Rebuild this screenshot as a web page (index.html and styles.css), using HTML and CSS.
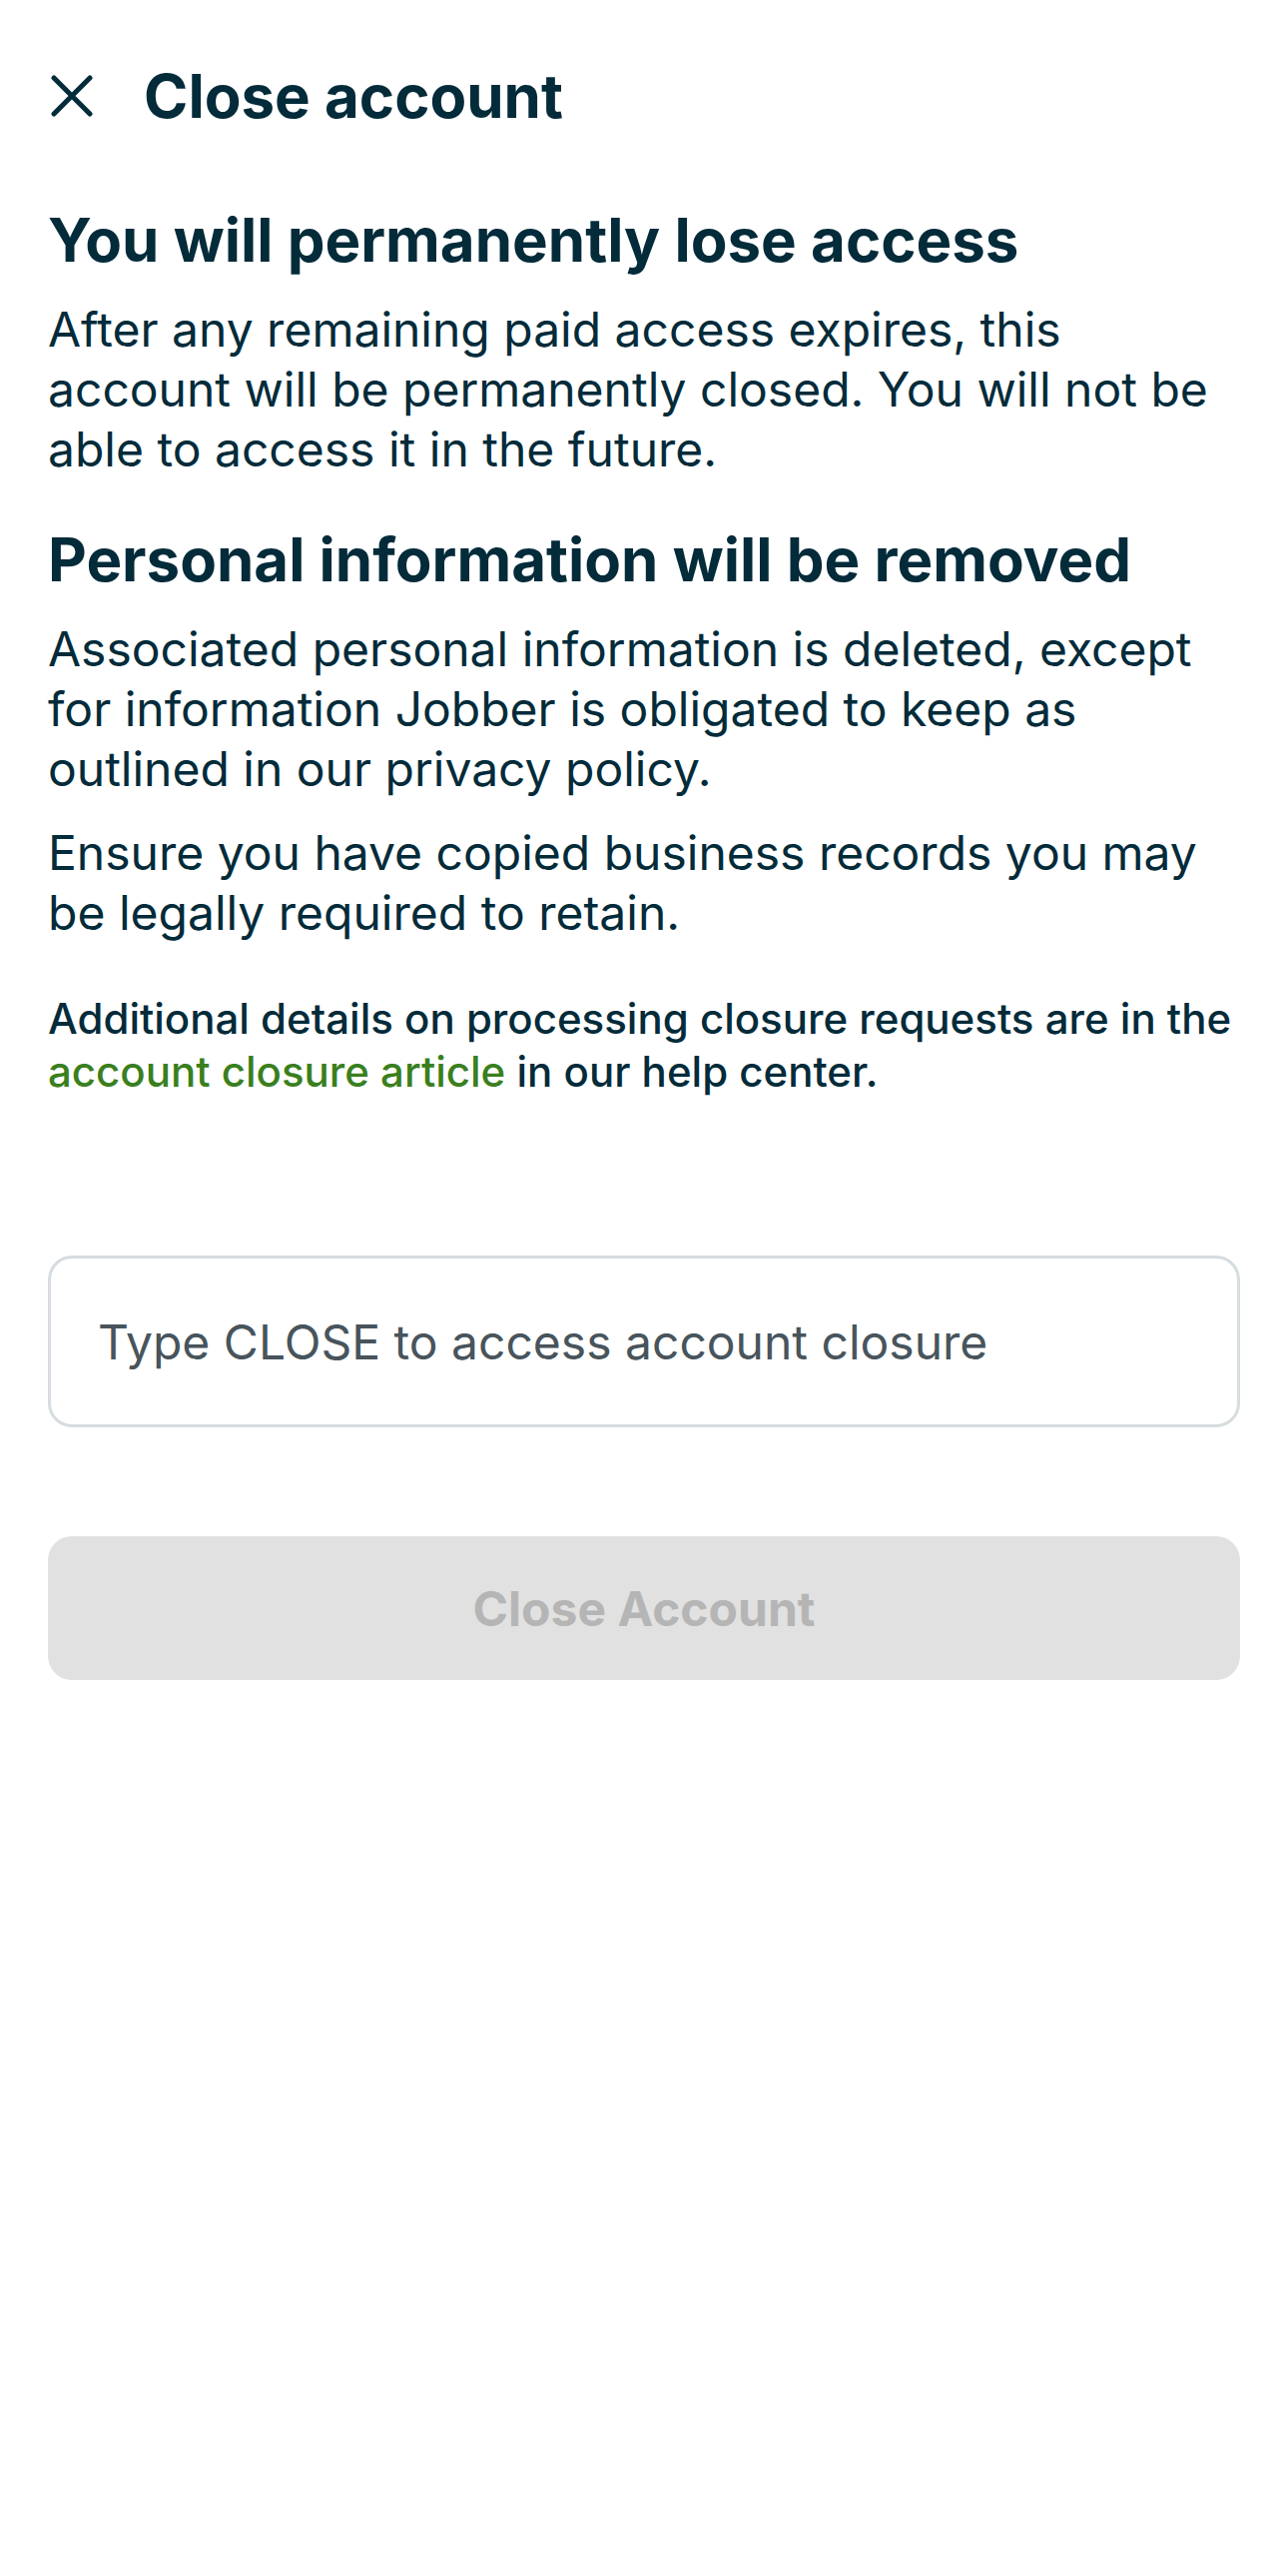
FILE: index.html
```html
<!DOCTYPE html>
<html lang="en">
<head>
  <meta charset="UTF-8">
  <title>Close account</title>
  <link rel="stylesheet" href="styles.css">
</head>
<body>
  <header class="top-bar">
    <button class="close-btn" aria-label="Close">
      <svg width="42" height="42" viewBox="0 0 42 42">
        <path d="M3 3 L39 39 M39 3 L3 39" stroke="#032b3a" stroke-width="5" stroke-linecap="round" fill="none"/>
      </svg>
    </button>
    <h1 class="title">Close account</h1>
  </header>

  <main class="content">
    <h2 class="section-title first">You will permanently lose access</h2>
    <p class="text">After any remaining paid access expires, this account will be permanently closed. You will not be able to access it in the future.</p>

    <h2 class="section-title">Personal information will be removed</h2>
    <p class="text">Associated personal information is deleted, except for information Jobber is obligated to keep as outlined in our privacy policy.</p>
    <p class="text">Ensure you have copied business records you may be legally required to retain.</p>

    <p class="note">Additional details on processing closure requests are in the <a href="#">account closure article</a> in our help center.</p>

    <input class="confirm-input" type="text" placeholder="Type CLOSE to access account closure">

    <button class="danger-btn" disabled>Close Account</button>
  </main>
</body>
</html>
```

FILE: styles.css
```css
body {
  margin: 0;
  background: #fff;
  color: #032b3a;
  font-family: Inter, "Noto Sans", sans-serif;
}

.top-bar {
  display: flex;
  align-items: center;
  height: 72px;
  padding: 60px 48px 0 51px;
}
.close-btn {
  display: flex;
  padding: 0;
  border: none;
  background: none;
  width: 42px;
  height: 42px;
}
.title {
  margin: 0 0 0 51px;
  font-size: 60px;
  line-height: 72px;
  font-weight: 700;
}

.content {
  padding: 0 48px;
  display: flex;
  flex-direction: column;
}

.section-title {
  margin: 44px 0 0;
  font-size: 60px;
  line-height: 72px;
  font-weight: 700;
}
.section-title.first {
  margin-top: 72px;
}

.text {
  margin: 24px 0 0;
  font-size: 48px;
  line-height: 60px;
}

.note {
  margin: 49px 0 0;
  font-size: 42px;
  line-height: 53px;
  font-weight: 500;
}
.note a {
  color: #3a7f1e;
  text-decoration: none;
}

.confirm-input {
  margin-top: 158px;
  height: 172px;
  box-sizing: border-box;
  border: 3px solid #d6dcdf;
  border-radius: 24px;
  padding: 0 47px;
  font-family: Inter, "Noto Sans", sans-serif;
  font-size: 48px;
  color: #032b3a;
  outline: none;
}
.confirm-input::placeholder {
  color: #48545c;
}

.danger-btn {
  margin-top: 109px;
  height: 144px;
  border: none;
  border-radius: 24px;
  background: #e1e1e1;
  color: #b5b5b5;
  font-family: Inter, "Noto Sans", sans-serif;
  font-size: 48px;
  font-weight: 700;
}
```
